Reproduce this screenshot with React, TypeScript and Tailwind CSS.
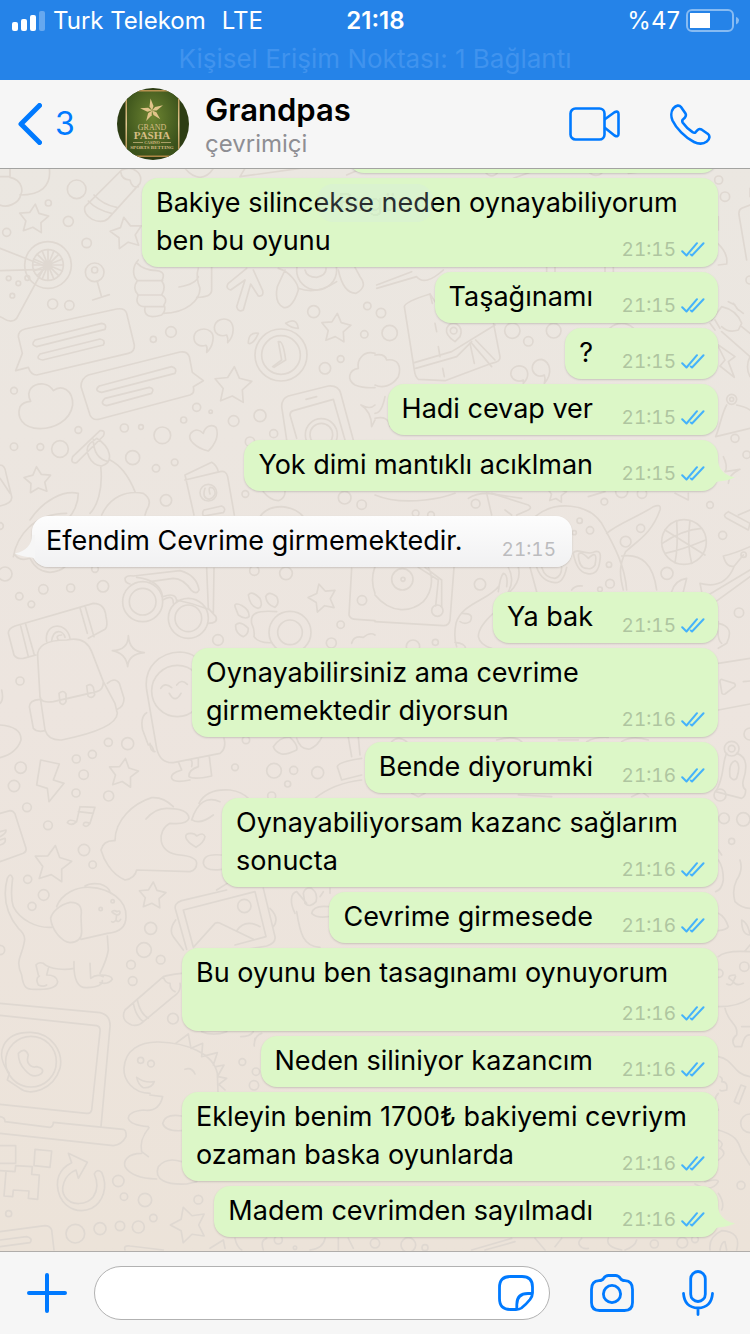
import React from "react";
import clsx from "clsx";

type Message = {
  lines: string[];
  time: string;
  // Fixed bubble width, for texts that wrap
  width?: string;
  incoming?: boolean;
  tail?: boolean;
  // Puts the time on a row below the text
  stacked?: boolean;
  gapBefore?: boolean;
};

const messages: Message[] = [
  { lines: ["Bakiye silincekse neden oynayabiliyorum", "ben bu oyunu"], time: "21:15", width: "w-[576px]" },
  { lines: ["Taşağınamı"], time: "21:15" },
  { lines: ["?"], time: "21:15" },
  { lines: ["Hadi cevap ver"], time: "21:15" },
  { lines: ["Yok dimi mantıklı acıklman"], time: "21:15", tail: true },
  { lines: ["Efendim Cevrime girmemektedir."], time: "21:15", width: "w-[540px]", incoming: true, tail: true, gapBefore: true },
  { lines: ["Ya bak"], time: "21:15", gapBefore: true },
  { lines: ["Oynayabilirsiniz ama cevrime", "girmemektedir diyorsun"], time: "21:16", width: "w-[526px]" },
  { lines: ["Bende diyorumki"], time: "21:16" },
  { lines: ["Oynayabiliyorsam kazanc sağlarım", "sonucta"], time: "21:16", width: "w-[496px]" },
  { lines: ["Cevrime girmesede"], time: "21:16" },
  { lines: ["Bu oyunu ben tasagınamı oynuyorum"], time: "21:16", width: "w-[536px]", stacked: true },
  { lines: ["Neden siliniyor kazancım"], time: "21:16" },
  { lines: ["Ekleyin benim 1700₺ bakiyemi cevriym", "ozaman baska oyunlarda"], time: "21:16", width: "w-[536px]" },
  { lines: ["Madem cevrimden sayılmadı"], time: "21:16", tail: true },
];

function starPath(cx: number, cy: number, r: number, turn: number) {
  const points = Array.from({ length: 10 }, (_, i) => {
    const radius = i % 2 === 0 ? r : r * 0.52;
    const a = ((turn + i * 36 - 90) * Math.PI) / 180;
    return `${(cx + radius * Math.cos(a)).toFixed(1)} ${(cy + radius * Math.sin(a)).toFixed(1)}`;
  });
  return `M${points.join("L")}Z`;
}

type DoodlePatchProps = {
  x: number;
  y: number;
  dots: number[][];
  stars?: number[][];
  paths: string[];
};

// One patch of the wallpaper, drawn at three times its final size
function DoodlePatch({ x, y, dots, stars = [], paths }: DoodlePatchProps) {
  return (
    <g transform={`translate(${x} ${y}) scale(0.33333)`}>
      {dots.map(([cx, cy, r], i) => (
        <circle key={i} cx={cx} cy={cy} r={r} />
      ))}
      {stars.map(([cx, cy, r, turn], i) => (
        <path key={i} d={starPath(cx, cy, r, turn)} />
      ))}
      {paths.map((d, i) => (
        <path key={i} d={d} />
      ))}
    </g>
  );
}

const patches: DoodlePatchProps[] = [
  {
    x: 0,
    y: 160,
    dots: [
      [230, 88, 28], [145, 129, 9], [205, 184, 15], [20, 217, 12], [260, 249, 14], [284, 337, 28], [284, 330, 9],
      [144, 315, 70], [144, 315, 46], [158, 432, 15], [208, 436, 14], [26, 355, 7], [82, 354, 7], [55, 370, 7],
      [37, 407, 7], [460, 538, 9], [513, 516, 16], [843, 585, 78], [843, 585, 58], [941, 455, 18], [1102, 438, 11],
      [1093, 523, 11], [975, 625, 17], [1022, 597, 10], [42, 692, 10], [590, 742, 12], [632, 755, 5], [701, 783, 16],
      [780, 767, 18], [551, 780, 9], [373, 804, 12], [423, 801, 7], [487, 826, 25], [235, 810, 10], [42, 860, 11],
      [121, 861, 10], [180, 867, 25], [398, 893, 21], [468, 925, 11], [524, 907, 10], [821, 821, 12], [964, 824, 48],
      [964, 824, 34], [498, 1021, 17], [736, 1002, 10], [1034, 1013, 19], [1085, 1034, 14], [750, 845, 14],
      [625, 998, 25], [950, 330, 60],
    ],
    stars: [[101, 178, 46, 6], [380, 221, 50, -10], [1008, 506, 46, 5], [699, 678, 58, 4], [113, 962, 42, -5]],
    paths: [
      "M0 50H30V20M30 52C70 60 70 100 60 105C120 105 155 80 148 25M62 105C58 130 20 145 0 135",
      "M255 140L365 30C400 15 430 40 420 70L325 175C300 200 245 170 255 140M265 123Q290 150 335 160M282 105Q310 135 350 142M362 35Q365 60 390 60Q395 85 415 80",
      "M0 265L135 318L50 475Q35 492 10 475L0 470M0 332L140 328",
      "M144 269V361M98 315H190M112 283L176 347M176 283L112 347M126 272L162 358M101 333L187 297M101 297L187 333M126 358L162 272",
      "M292 365L304 408M278 420L328 404",
      "M415 300C395 320 398 350 412 362C395 385 410 400 415 405C405 425 415 440 435 440C430 470 450 475 485 465Q500 450 492 435Q505 415 485 405Q500 380 485 363Q500 335 470 332Q430 330 412 310M415 362H488M413 405H485M432 440H490M490 460C560 460 600 420 600 385C590 360 590 340 595 325M537 381C570 375 590 365 595 350M635 322V390Q635 412 590 412",
      "M740 325L685 370Q675 385 692 390L735 360L710 440Q715 458 730 450L752 372L775 408Q792 410 788 392L760 330M835 325C870 335 895 370 895 390C880 440 860 445 850 442C825 430 828 400 832 380L855 330M895 385Q950 405 1010 365M1015 330Q1030 400 1068 400Q1105 380 1080 350L1065 322M915 330Q920 352 950 352Q980 345 978 325",
      "M75 507L350 447Q375 443 380 460L403 555Q405 575 385 580L110 645Q92 645 85 622L47 632L67 580L55 530Q55 512 75 507ZM105 540L305 490Q322 492 315 508L110 560Q90 555 105 540M120 582L300 537Q318 540 310 555L128 600Q105 597 120 582",
      "M265 645L540 576Q562 573 568 590L577 637L610 662L580 680Q585 700 570 705L300 777Q278 783 270 765L243 680Q243 655 265 645ZM298 678L515 620Q533 625 525 640L305 697Q280 692 298 678M315 715L448 682Q465 685 455 700L320 737Q297 732 315 715",
      "M620 577C640 560 645 525 632 515C615 500 585 508 582 530C580 552 600 562 618 556C621 560 622 570 620 577ZM683 548C705 525 702 495 690 483C672 470 645 480 643 502C643 522 660 532 680 525C683 530 684 540 683 548Z",
      "M835 545L845 600L818 620M838 545Q850 545 857 600L822 622M775 520Q745 515 745 550Q760 555 775 520M857 490Q890 470 895 505Q875 505 857 490",
      "M92 724C75 690 100 670 130 672Q150 675 160 692C185 672 220 690 218 735C210 785 160 805 120 806C65 805 50 770 60 740Q70 725 92 724",
      "M1125 580C1090 570 1070 600 1075 625C1045 630 1040 660 1065 675Q1090 685 1125 683",
      "M625 873C590 865 560 840 572 820Q590 800 610 820C615 800 635 790 648 802C660 830 640 860 625 873Z",
      "M860 840L845 740Q845 715 865 708L985 678Q1015 675 1022 700L1060 840M890 835L870 765Q870 755 880 752L1000 718L1035 840M918 718L950 710",
      "M1083 735Q1110 750 1125 735M1083 735Q1115 755 1115 800L1125 780",
      "M218 890L300 812Q318 810 310 828L230 908Q210 912 218 890M270 850C250 870 270 915 305 918C345 905 330 860 290 835ZM280 838Q280 895 325 905M302 918C310 990 290 1040 270 1060M330 900C370 920 395 970 405 995M90 1080C130 1020 190 990 235 1000C235 1030 220 1060 205 1075M305 1065C330 1010 380 990 430 1000Q460 1020 440 1050L435 1065",
      "M555 945L635 907Q650 915 655 935M555 960L660 935Q678 930 683 950L703 1065M555 945L582 1065M612 1050L665 1038Q680 1045 670 1058L610 1068Q605 1058 612 1050M615 985Q605 1015 628 1018Q655 1005 640 985Q622 975 630 1002",
      "M0 915Q15 915 18 940L35 1010Q38 1030 0 1038M0 955L30 1000",
      "M555 25Q575 50 600 52Q625 50 640 25M720 50L735 25M720 50L900 25M1040 45L1075 30",
      "M780 1070Q800 1040 845 1040Q890 1045 910 1070M790 995Q810 1020 835 1022Q855 1015 855 995",
    ],
  },
  {
    x: 375,
    y: 160,
    dots: [
      [1031, 60, 12], [1050, 110, 14], [18, 459, 14], [44, 519, 23], [236, 512, 10], [412, 512, 23], [460, 544, 14],
      [536, 512, 22], [1070, 718, 15], [1070, 718, 6], [1115, 884, 11], [1080, 835, 12], [740, 540, 50],
      [1125, 360, 12],
    ],
    stars: [],
    paths: [
      "M5 375L110 335M5 385L125 350Q150 380 205 330M88 440Q90 425 165 402L190 440L340 410L375 590Q378 605 350 610L210 662L130 658Q120 650 118 630ZM118 608L230 575L360 495M122 625L245 590L290 545M290 550L350 620M302 540L360 600M240 545Q210 525 215 505Q225 485 245 492Q265 505 255 530Z",
      "M180 490L185 515M190 560L195 590M203 625L208 650M285 550L298 610M165 402L172 430",
      "M0 585Q30 580 35 600C70 595 80 620 70 650C50 680 20 685 0 675M30 710Q20 760 0 760M0 775Q40 765 45 800",
      "M445 670C465 650 460 628 445 620C425 612 405 625 408 645C412 660 430 668 445 660ZM508 670C535 640 525 605 500 598C480 598 468 615 473 632C480 648 495 652 508 645Q512 655 508 670Z",
      "M1125 135L1100 145Q1090 150 1092 165L1115 300M1125 85V110M1028 250Q1060 280 1055 312L1030 315M1030 170V210",
      "M1010 480L1040 440Q1085 450 1100 490L1090 510Q1060 520 1040 500M1100 500L1125 520M1060 425L1080 435M1075 430L1090 450M1085 445L1105 460M1005 490L1020 510M1020 480L1035 505M1040 515L1125 590",
      "M1030 560L1050 600L1035 618L1078 652L1060 605L1080 590L1030 555M1125 590Q1110 620 1125 650",
      "M1055 735C1040 760 1035 800 1022 830L1125 805M1085 735Q1110 740 1125 750",
      "M1045 890Q1060 920 1050 935L1095 928Q1060 945 1060 970",
      "M415 55L470 35M330 35Q350 60 370 35M640 35Q660 55 680 40M760 40L800 35M515 320V335M540 320V335M690 320V335M715 320V335",
      "M280 1015Q300 1000 340 1000L440 1015M640 1010L690 995M900 1000L940 1020V1000M0 1005Q60 1030 150 1020Q200 1015 240 1000",
    ],
  },
  {
    x: 0,
    y: 500,
    dots: [
      [15, 222, 21], [58, 289, 11], [130, 268, 14], [94, 313, 10], [212, 264, 12], [309, 259, 17], [285, 207, 10],
      [428, 305, 60], [428, 305, 40], [565, 355, 60], [565, 355, 40], [763, 212, 14], [858, 220, 19], [654, 420, 16],
      [1022, 374, 11], [1086, 301, 14], [994, 429, 15], [870, 397, 63], [870, 397, 37], [60, 543, 12], [532, 573, 77],
      [325, 727, 12], [383, 731, 18], [277, 763, 12], [229, 777, 12], [62, 803, 17], [251, 824, 14], [42, 858, 17],
      [228, 879, 12], [326, 888, 15], [81, 922, 13], [144, 976, 13], [252, 1050, 17], [278, 1094, 11], [705, 802, 10],
      [822, 812, 22], [881, 811, 12], [953, 818, 18], [863, 852, 9], [738, 720, 11], [815, 888, 12], [0, 78, 10],
    ],
    stars: [[968, 295, 44, -15], [370, 821, 46, 8], [158, 1094, 58, 8]],
    paths: [
      "M40 170C50 110 100 40 200 40M45 165Q60 185 90 175Q110 215 150 217Q180 215 195 200",
      "M375 235Q380 225 400 228L540 212Q590 225 597 270Q590 285 575 272Q550 235 520 235L450 245M375 235Q375 250 390 252M410 232Q480 240 488 290Q530 275 530 305M488 300Q520 280 520 310M620 205L625 325L648 350Q655 370 625 370M642 205L640 340M625 328Q580 310 530 300",
      "M705 320C700 300 750 320 747 350Q735 360 715 345ZM745 285Q755 270 780 295Q790 320 775 325Q750 320 745 285M797 290Q805 270 830 290Q840 310 825 322Q800 315 797 290M707 375Q720 360 745 385Q745 405 730 410Q705 400 707 375M755 370C750 340 770 330 830 335M755 370Q765 390 762 410Q775 430 815 428",
      "M25 400Q25 385 45 378L280 310Q315 310 318 350Q325 380 315 388L265 415M25 400L42 465Q50 478 70 475L108 465M62 378L85 470M77 373L103 465M240 323L262 400M255 318L282 410M140 425C130 370 200 360 210 415M155 423C160 385 190 390 195 412M175 420Q165 405 185 405",
      "M113 470C110 440 135 420 200 420C245 410 265 430 275 455L310 545Q310 570 290 575L160 605Q122 610 120 590ZM122 600L135 690Q145 722 185 720C260 705 350 680 352 640L345 610L310 545M120 598Q88 600 88 620L100 685Q110 698 135 692M322 550Q345 530 358 550L372 595Q372 620 352 628M177 580Q190 568 198 582V605Q190 620 180 608ZM260 558Q272 548 280 562L284 585Q275 598 264 588ZM198 597L262 582",
      "M385 407Q388 455 433 458Q385 462 383 500Q378 460 337 452Q385 450 385 407Z",
      "M470 745L440 570C430 500 480 458 540 456Q570 458 585 470M470 745Q480 790 520 788L660 760Q680 745 672 715M440 638Q420 650 428 690L445 735Q455 730 462 755M450 730Q450 755 465 755M535 785L545 810Q510 820 515 835Q520 850 570 840M565 780Q580 775 575 800M595 775V800Q565 810 567 830Q580 840 635 828L628 770M482 565Q495 545 515 563M530 555Q545 535 562 553M508 580Q525 612 543 580",
      "M0 675Q65 680 63 720Q50 760 0 773M0 610Q12 600 5 570",
      "M122 780L178 792L160 840L192 850L147 905L142 865L110 855Z",
      "M240 920L285 922L270 970M240 920L230 965M235 935L280 940M230 965Q205 955 202 968Q215 980 230 965M270 970Q250 962 250 975Q260 985 270 970",
      "M0 940L30 932Q40 932 45 942L78 1045Q80 1055 70 1060L0 1085M0 995L18 990Q20 1000 0 1010M0 1020L15 1015Q20 1030 0 1035",
      "M438 957Q465 925 500 925Q565 925 567 955Q560 975 510 970C470 990 470 1060 540 1065Q590 1070 590 1090Q590 1110 570 1115L410 1110Q405 1135 375 1140C330 1120 310 1075 303 1050Q310 1020 345 1022C345 960 400 910 455 893Q490 890 520 920M575 960Q600 880 660 905M577 960Q600 975 640 945M597 910Q620 865 690 870Q725 875 745 895M665 1065C610 1060 610 1080 610 1090Q615 1115 665 1108M588 1042C550 1020 550 1000 572 1000Q585 1000 590 1008Q610 995 615 1010Q612 1028 588 1042",
      "M820 740Q840 710 870 712Q895 735 890 750Q860 765 845 762Q825 755 820 740M890 715Q900 750 930 747Q955 735 965 712M1045 712L1055 770M1075 712L1080 765M1012 800Q1015 785 1085 775M1012 800L1025 840L1085 825M945 895Q1000 850 1085 840",
      "M1055 205L1047 345Q1050 358 1070 358L1125 362M1055 430Q1060 405 1090 412Q1110 395 1125 405M1125 200Q1110 240 1125 280",
    ],
  },
  {
    x: 375,
    y: 480,
    dots: [
      [302, 71, 13], [315, 313, 17], [82, 298, 32], [84, 298, 6], [614, 122, 8], [645, 151, 11], [598, 158, 6],
      [797, 145, 12], [688, 65, 10], [801, 41, 14], [740, 35, 18], [1005, 75, 10], [1043, 166, 12], [927, 186, 67],
      [702, 254, 8], [705, 311, 13], [876, 280, 18], [752, 185, 16], [1106, 224, 8], [1092, 398, 14], [181, 487, 9],
      [114, 500, 20], [122, 100, 10], [168, 105, 10], [187, 392, 17], [1070, 806, 22], [1070, 806, 10],
      [1047, 1015, 16], [1105, 1018, 20], [1070, 1084, 9], [1125, 762, 18], [675, 328, 7], [1035, 945, 18],
    ],
    stars: [[545, 40, 30, 8]],
    paths: [
      "M335 40L350 105M350 40L460 75Q475 85 455 92L425 105M390 90L410 105M480 110C540 60 640 70 680 130C720 200 750 260 755 330M695 160C730 130 790 110 835 80Q860 70 855 90C830 160 790 180 752 215C730 260 735 290 745 330M740 228Q830 215 845 330",
      "M595 220C600 200 640 230 660 215Q680 210 675 240Q670 290 635 280Q605 275 595 220M610 225Q615 210 640 235Q670 205 660 255Q650 270 635 265Q612 265 610 225M485 262Q500 305 540 308Q565 310 575 262M500 262Q510 295 540 295Q560 290 560 262M465 262L485 335M590 330Q600 315 622 318",
      "M0 345C50 405 110 395 145 365C180 325 170 280 160 262M0 425L205 437Q222 437 225 420L237 262M130 262L190 300M150 262L200 300V380M190 300L182 378M400 262Q420 300 400 335M430 262Q440 300 405 335M370 335Q375 290 385 280Q400 285 395 320M370 320C340 360 260 370 243 430Q235 470 245 500M262 400Q300 400 285 425Q270 435 255 425M355 400Q310 440 310 470Q315 495 350 505M240 487Q270 490 272 505",
      "M870 150L990 225M905 122Q910 200 900 248M945 122Q935 190 950 250M862 190Q920 150 980 145M870 220Q920 210 992 180",
      "M1060 95L1125 130M1060 95Q1040 105 1055 115L1120 150L1125 130M1090 105L1125 90M1045 228Q1080 220 1125 200M1045 228Q1055 265 1078 258M1078 258L1105 225M975 310Q1050 330 1078 258M975 310L980 335M1000 345L1125 270M1015 370L1125 290M935 295Q900 300 890 335M935 295L925 335",
      "M1030 430Q1080 440 1055 490L1030 505M1030 425Q1025 480 1040 490M1030 550L1125 535M1030 690L1125 672M1035 605Q1035 595 1045 600L1078 610Q1085 618 1075 623L1050 642Q1040 645 1040 635ZM1105 605L1125 603",
      "M1055 820C1040 850 1050 890 1022 935M1085 820C1120 830 1115 870 1105 900Q1100 920 1112 930Q1112 950 1100 955L1022 935M1065 890Q1060 850 1080 842Q1100 850 1085 895Q1075 905 1065 890",
      "M50 785Q70 765 95 785M365 780Q420 765 440 785M550 780H610M635 785Q660 770 700 772M740 785Q770 765 820 780M110 940L130 950L150 940M430 945L530 950M770 950L800 935L820 950M1030 1110L1040 1125",
    ],
  },
  {
    x: 0,
    y: 860,
    dots: [
      [83, 58, 12], [131, 105, 16], [96, 139, 12], [302, 147, 5], [338, 124, 5], [452, 205, 18],
      [432, 270, 22], [482, 299, 13], [393, 314, 13], [398, 363, 13], [519, 476, 16], [733, 138, 20], [93, 605, 76],
      [422, 601, 9], [453, 611, 10], [727, 606, 10], [768, 635, 11], [762, 676, 14], [355, 963, 17], [372, 1010, 11],
      [435, 1020, 20], [595, 1019, 13], [460, 1074, 11], [415, 1101, 18], [360, 1098, 14], [300, 1106, 18],
      [226, 1121, 28], [26, 1061, 9], [0, 270, 14], [835, 1140, 12], [885, 1163, 5],
    ],
    stars: [[457, 108, 42, 4], [567, 1095, 56, -18]],
    paths: [
      "M155 202C110 205 60 180 40 140C30 110 35 80 38 55Q32 35 22 55C10 100 10 150 55 205Q80 225 72 250C65 290 45 300 65 345C70 385 80 390 110 388Q170 390 173 365Q170 345 140 345L145 325M118 348Q105 355 115 375Q130 382 140 375M115 345L108 315Q115 305 130 310C150 330 200 330 222 325M222 305C220 360 235 385 260 383Q310 380 307 362M270 310L272 355Q290 340 310 350M300 340Q320 300 325 270L322 228M300 345Q335 345 337 358Q325 375 300 368",
      "M170 140C185 100 230 80 270 82C330 85 380 120 378 170Q378 215 322 220L243 238M243 170Q250 125 210 127C175 135 155 160 152 175C155 210 185 245 210 248Q245 245 245 215ZM255 78Q270 68 300 72Q325 80 330 95M350 165Q330 155 338 153Q345 150 350 155Q360 150 360 158Q358 165 350 165M350 165L348 180Q340 190 335 185M348 180Q355 190 362 178",
      "M545 122L680 90M790 85L825 230Q828 250 800 258L740 268M545 122Q520 130 527 150L560 268M550 150L765 95L798 230L705 255M550 150L580 262L645 190Q655 185 665 192L760 238M710 212Q735 175 780 200M527 180Q505 210 520 230L550 270M810 145Q840 175 820 200M650 90L685 68",
      "M885 160C870 130 870 100 890 95L920 130M910 100Q915 80 935 85Q955 100 948 125Q930 145 915 130ZM985 140Q940 135 935 160Q950 175 985 170M890 155C900 220 910 260 960 262M960 110L970 95M990 85V100",
      "M545 340Q500 345 490 350L375 450Q360 480 395 495Q415 500 430 485L520 410Q545 395 540 370M490 350Q495 370 510 370Q510 390 525 395M412 420Q420 460 445 475M400 430Q408 470 430 485",
      "M0 430L300 458Q332 465 330 500L303 800M0 466L290 497Q302 500 300 515L275 750Q272 762 260 760L0 733M0 770Q15 772 15 785L150 802Q160 800 160 787L370 808Q380 812 378 830Q365 855 340 857L0 820M28 640C-20 580 10 515 93 517C160 520 190 580 180 625C160 690 90 710 60 685L22 660Z",
      "M55 580Q75 560 85 585Q80 600 85 610Q95 625 110 620Q135 625 125 640Q100 660 75 630Q55 610 55 580",
      "M450 700C400 700 370 660 372 625C375 570 420 545 475 546C560 548 640 580 652 640L654 695M527 550L565 522L573 565M573 565L608 550L605 590M605 590L652 578L640 615M648 620L672 615L655 645M655 650L680 655L658 672M658 675L675 690M555 628Q575 620 585 642M410 652Q435 670 463 665Q455 685 430 683Q415 675 410 652M450 705L488 710C480 745 460 755 430 750Q385 755 385 775Q390 795 445 800M545 768Q495 760 488 790Q495 815 545 812M447 803C425 830 420 850 425 875L445 890M425 880C380 880 370 905 375 920Q395 955 470 957M545 905Q500 890 475 920C460 960 500 975 560 972L590 965",
      "M765 535Q762 555 763 558M722 530Q750 530 760 515M762 555Q765 525 785 520M605 515Q640 530 680 515",
      "M0 857H47V910H0M105 868L155 873L150 922L102 917ZM0 932L45 935L47 917L97 920L95 943L118 945L113 1018L85 1015L87 993L40 990L38 1010L12 1008L18 935",
      "M205 880L262 907L235 955L228 930C190 945 180 990 195 1010C215 1040 260 1035 280 1010Q300 980 283 942Q290 925 305 937C325 980 310 1025 275 1045C240 1060 200 1050 180 1010C160 960 180 925 215 908Z",
      "M0 1115L135 1097Q150 1097 155 1110L162 1170M0 1140L80 1130Q100 1135 90 1148L0 1160M375 1170Q370 1155 390 1158L490 1170M630 1165L670 1140L675 1165M705 1135Q710 1160 725 1170M790 1170Q780 1140 800 1135M930 1170Q970 1165 975 1135M1015 1135V1170M1045 1135L1060 1165",
    ],
  },
  {
    x: 375,
    y: 860,
    dots: [
      [1108, 320, 14], [1098, 976, 12], [1125, 790, 28], [100, 1155, 22], [150, 1163, 9], [838, 1152, 12],
      [922, 1148, 16], [960, 1138, 10], [1032, 340, 12], [0, 1150, 14],
    ],
    stars: [],
    paths: [
      "M1030 0Q1045 20 1045 60Q1040 90 1022 95M1095 0Q1105 30 1085 60Q1070 90 1080 125Q1100 145 1125 145M1030 160Q1050 170 1060 200Q1055 210 1030 212M1100 180Q1120 190 1125 225Q1100 225 1100 180",
      "M1030 290Q1050 270 1125 275M1108 275L1125 255M1080 345Q1060 345 1062 355L1075 365Q1085 340 1080 355M1075 365Q1070 380 1055 372M1075 365Q1085 380 1105 370M1030 440Q1090 440 1125 415M1050 445C1060 490 1090 490 1085 525Q1065 540 1080 560H1100Q1110 520 1125 525M1100 500H1125",
      "M1030 590C1080 600 1070 640 1125 650M1035 650Q1045 655 1040 665Q1060 665 1055 690Q1035 695 1035 690M1030 700Q1010 720 1030 750M1078 725L1098 675L1112 680L1092 732ZM1030 810C1080 825 1090 840 1100 875L1125 915M1030 840Q1050 850 1035 865Q1060 880 1030 900M960 972Q1010 1000 1030 965Q1030 955 990 965",
      "M1030 1000Q1050 1030 1040 1050M1085 1170Q1100 1115 1040 1112Q1000 1130 1005 1170M1035 1170Q1040 1145 1050 1145L1055 1170M620 1135C600 1150 620 1170 640 1165M700 1135Q690 1160 740 1170M750 1170Q780 1160 785 1140M290 1170L410 1135M330 1170L420 1145M480 1135L510 1170M560 1135L540 1160",
    ],
  },
];

function Wallpaper() {
  return (
    <svg
      aria-hidden="true"
      className="pointer-events-none absolute inset-0 h-full w-full"
      viewBox="0 169 750 1082"
      preserveAspectRatio="xMidYMin slice"
      fill="none"
      stroke="#dfd8d1"
      strokeWidth="5"
      strokeLinecap="round"
      strokeLinejoin="round"
    >
      {patches.map((patch, i) => (
        <DoodlePatch key={i} {...patch} />
      ))}
    </svg>
  );
}

function Avatar() {
  return (
    <svg viewBox="0 0 72 72" className="size-18 shrink-0 rounded-full" role="img" aria-label="Grandpas">
      <defs>
        <radialGradient id="felt" cx="0.5" cy="0.4" r="0.6">
          <stop offset="0" stopColor="#6d8431" />
          <stop offset="1" stopColor="#3b521b" />
        </radialGradient>
        <linearGradient id="gold" x1="0" y1="0" x2="0" y2="1">
          <stop offset="0" stopColor="#b58d4b" />
          <stop offset="0.5" stopColor="#e0c78f" />
          <stop offset="1" stopColor="#a97f3d" />
        </linearGradient>
      </defs>
      <rect width="72" height="72" fill="#2d3d14" />
      <rect x="10" y="3" width="51" height="66" fill="url(#felt)" />
      <path d="M8.500 0H10V72H8.500ZM61 0H62.500V72H61ZM10 2H61V3.500H10ZM10 67.500H61V69H10Z" fill="url(#gold)" />
      {[0, 72, 144, 216, 288].map((turn) => (
        <path key={turn} d="M35 22.500L32.500 18.500L33.500 10.500L36.500 18Z" fill="#e2c48a" transform={`rotate(${turn} 35 22.500)`} />
      ))}
      <g fill="#d6bd85" textAnchor="middle" className="font-['Liberation_Serif',serif]">
        <text x="35" y="42" fontSize="8">GRAND</text>
        <text x="35" y="51" fontSize="11" fontWeight="700">PASHA</text>
        <text x="35" y="56" fontSize="4" fontWeight="700">CASINO</text>
        <text x="35" y="61" fontSize="5" fontWeight="700">SPORTS BETTING</text>
      </g>
      <path d="M16 54.500H26M44 54.500H54" stroke="#d6bd85" strokeWidth="0.700" />
    </svg>
  );
}

function ReadTicks() {
  return (
    <svg
      viewBox="0 0 24 16"
      className="h-4 w-6"
      fill="none"
      stroke="#45b2fb"
      strokeWidth="2"
      strokeLinecap="round"
      strokeLinejoin="round"
      role="img"
      aria-label="Okundu"
    >
      <path d="M1.200 9.200L5.500 13.500L16 1.200M9.800 12.500L11 13.500L22.500 1.200" />
    </svg>
  );
}

function Tail({ incoming }: { incoming?: boolean }) {
  return (
    <svg
      aria-hidden="true"
      viewBox="0 0 20 24"
      className={clsx("absolute bottom-2 h-6 w-5", incoming ? "-left-[17px] -scale-x-100" : "-right-[17px]")}
    >
      <path d="M0 0H3C3 10 9 16 20 18.500C15 21 9 22 3 22.500L0 24Z" fill={incoming ? "#f6f6f6" : "#dcf7c7"} />
    </svg>
  );
}

function Bubble({ message }: { message: Message }) {
  const { lines, time, width, incoming, tail, stacked, gapBefore } = message;
  return (
    <li
      className={clsx(
        "relative grid shrink-0 rounded-2xl pt-[6px] pb-[7px] pl-[14px] shadow-[0_1px_2px_rgba(0,0,0,0.15)]",
        incoming ? "self-start bg-linear-to-b from-[#fdfdfd] to-[#f1f1f2] pr-4" : "self-end bg-[#dcf7c7] pr-[13px]",
        gapBefore && "mt-5",
        width
      )}
    >
      <p
        className={clsx(
          "text-[27px] leading-[38px] whitespace-nowrap text-black [grid-area:1/1]",
          !width && "pr-[112px]",
          stacked && "pb-8"
        )}
      >
        {lines.map((line) => (
          <span key={line} className="block w-fit">
            {line}
          </span>
        ))}
      </p>
      <div className="flex items-center gap-[5px] self-end justify-self-end [grid-area:1/1]">
        <time className={clsx("text-[19px] leading-5 tabular-nums", incoming ? "text-[#bcbcbe]" : "text-[#afc5a0]")}>{time}</time>
        {!incoming && <ReadTicks />}
      </div>
      {tail && <Tail incoming={incoming} />}
    </li>
  );
}

function StatusBar() {
  return (
    <div className="shrink-0 bg-[#2583e8] text-white">
      <div className="grid h-10 grid-cols-[1fr_auto_1fr] items-center pt-px pr-[11px] pl-3 text-2xl">
        <div className="flex items-center gap-2 whitespace-nowrap">
          <svg viewBox="0 0 33 20" className="h-5 w-[33px] shrink-0" fill="#fff" aria-hidden="true">
            <rect x="0" y="11" width="6" height="9" rx="2" />
            <rect x="9" y="8" width="6" height="12" rx="2" />
            <rect x="18" y="4" width="6" height="16" rx="2" />
            <rect x="27" y="0" width="6" height="20" rx="2" opacity="0.3" />
          </svg>
          <span>Turk Telekom</span>
          <span className="ml-2">LTE</span>
        </div>
        <span className="px-2 text-center font-semibold">21:18</span>
        <div className="flex items-center justify-end gap-1.5">
          <span>%47</span>
          <svg viewBox="0 0 53 24" className="h-6 w-[53px]" aria-hidden="true">
            <rect x="1" y="1" width="46" height="21" rx="5" fill="none" stroke="#fff" strokeOpacity="0.45" strokeWidth="2" />
            <rect x="4" y="4" width="20" height="15" fill="#fff" />
            <path d="M50 8Q53 9 53 11.500Q53 14 50 15.500Z" fill="#fff" fillOpacity="0.45" />
          </svg>
        </div>
      </div>
      <p className="h-10 text-center text-[26px] leading-[38px] text-[#4093ee]">Kişisel Erişim Noktası: 1 Bağlantı</p>
    </div>
  );
}

function ChatHeader() {
  return (
    <header className="flex h-[89px] shrink-0 items-center border-b border-[#a3a3a1] bg-[#f6f6f6] pr-[39px] pl-[18px]">
      <button type="button" aria-label="Geri" className="flex w-[99px] items-center gap-[13px] text-[#007aff]">
        <svg viewBox="0 0 24 42" className="h-[42px] w-6" fill="none" stroke="currentColor" strokeWidth="5" strokeLinecap="round" strokeLinejoin="round">
          <path d="M21.500 2.500L3 21L21.500 39.500" />
        </svg>
        <span className="text-[32px] leading-10">3</span>
      </button>
      <Avatar />
      <div className="ml-4 flex-1 pt-[3px]">
        <h1 className="text-[31px] leading-9 font-semibold text-black">Grandpas</h1>
        <p className="text-2xl leading-8 text-[#8e8e93]">çevrimiçi</p>
      </div>
      <div className="flex items-center gap-[50px] text-[#007aff]">
        <button type="button" aria-label="Görüntülü arama">
          <svg viewBox="0 0 51 34" className="h-[34px] w-[51px]" fill="none" stroke="currentColor" strokeWidth="2.600" strokeLinejoin="round">
            <rect x="1.500" y="1.500" width="34" height="31" rx="5" />
            <path d="M35.500 12.500L45.500 5.200Q49.500 3.500 49.500 7V27Q49.500 30.500 45.500 28.500L35.500 20.500" />
          </svg>
        </button>
        <button type="button" aria-label="Sesli arama">
          <svg viewBox="0 0 41 41" className="size-[41px]" fill="none" stroke="currentColor" strokeWidth="2.600" strokeLinejoin="round">
            <path d="M3.500 4.200C6 1.200 9.300 0.800 11 3L15.500 9.500Q16.500 11.500 15 13.500L12.800 15.600Q11.700 17 12.800 18.700C15.500 22.500 18.500 25.500 22.600 28.200Q24.400 29.300 25.600 28.200L28 25.700Q29.500 24.500 31.500 25.500L38 30C40.200 31.700 39.800 35 36.800 37.500C33.500 40 28.500 40.200 24 38C15 33.500 6 24 2.500 16.500C0.800 12.500 1 7.200 3.500 4.200Z" />
          </svg>
        </button>
      </div>
    </header>
  );
}

function Composer() {
  return (
    <footer className="flex h-[83px] shrink-0 items-center border-t border-[#b0adaa] bg-[#f6f6f6] pr-9 pl-[27px] text-[#007aff]">
      <button type="button" aria-label="Ekle">
        <svg viewBox="0 0 40 40" className="size-10" stroke="currentColor" strokeWidth="4" strokeLinecap="round">
          <path d="M20 2V38M2 20H38" />
        </svg>
      </button>
      <div className="ml-[27px] flex h-[54px] min-w-0 flex-1 items-center rounded-full border border-[#b2b2b2] bg-white pr-[15px] pl-6">
        <input type="text" aria-label="Mesaj" className="h-full min-w-0 flex-1 bg-transparent text-[27px] text-black outline-none" />
        <button type="button" aria-label="Çıkartma">
          <svg viewBox="0 0 36 36" className="size-9" fill="none" stroke="currentColor" strokeWidth="2.800" strokeLinejoin="round">
            <path d="M12.500 1.500H24Q34.500 1.500 34.500 12V18Q34.500 21 32 24.500Q28.500 29 23.500 33Q21.500 34.500 18 34.500H12.500Q1.500 34.500 1.500 23.500V12.500Q1.500 1.500 12.500 1.500Z" />
            <path d="M34.300 18.500H30Q18.800 18.500 18.800 29.500V34.300" />
          </svg>
        </button>
      </div>
      <button type="button" aria-label="Kamera" className="ml-10">
        <svg viewBox="0 0 44 38" className="h-[38px] w-11" fill="none" stroke="currentColor" strokeWidth="2.800" strokeLinejoin="round">
          <path d="M1.500 15.500Q1.500 6.800 9 6.600Q12.500 6.500 13.500 4.500Q15.500 1.500 18.500 1.500H25.500Q28.500 1.500 30.500 4.500Q31.500 6.500 35 6.600Q42.500 6.800 42.500 15.500V28.500Q42.500 36.500 34.500 36.500H9.500Q1.500 36.500 1.500 28.500Z" />
          <circle cx="22" cy="20" r="8.600" />
        </svg>
      </button>
      <button type="button" aria-label="Sesli mesaj" className="ml-12">
        <svg viewBox="0 0 32 46" className="h-[46px] w-8" fill="none" stroke="currentColor" strokeWidth="2.800" strokeLinecap="round">
          <rect x="8.700" y="1.500" width="14.600" height="30" rx="7.300" />
          <path d="M1.500 23.500Q2.500 37.500 16 38Q29.500 37.500 30.500 23.500M16 38V44.500" />
        </svg>
      </button>
    </footer>
  );
}

export default function App() {
  return (
    <div className="flex h-screen flex-col overflow-hidden font-['Inter','Noto_Sans',sans-serif]">
      <StatusBar />
      <ChatHeader />
      <main className="relative flex min-h-0 flex-1 flex-col justify-end overflow-hidden bg-linear-to-b from-[#ebe7e1] via-[#ede5df] to-[#ece3d9]">
        <Wallpaper />
        <ul className="relative flex flex-col gap-[5px] px-8 pb-[14px]">
          {/* Older message, scrolled out of view but for its lower edge */}
          <li className="h-12 w-[370px] self-end rounded-2xl bg-[#dcf7c7] shadow-[0_1px_2px_rgba(0,0,0,0.15)]" />
          {messages.map((message, i) => (
            <Bubble key={i} message={message} />
          ))}
        </ul>
        {/* Date chip, nearly faded out after scrolling */}
        <div className="absolute top-[15px] left-1/2 w-[116px] -translate-x-1/2 rounded-2xl bg-[#d2e6ee]/20 text-center text-2xl leading-[38px] font-medium text-black/5">
          Bugün
        </div>
      </main>
      <Composer />
    </div>
  );
}
